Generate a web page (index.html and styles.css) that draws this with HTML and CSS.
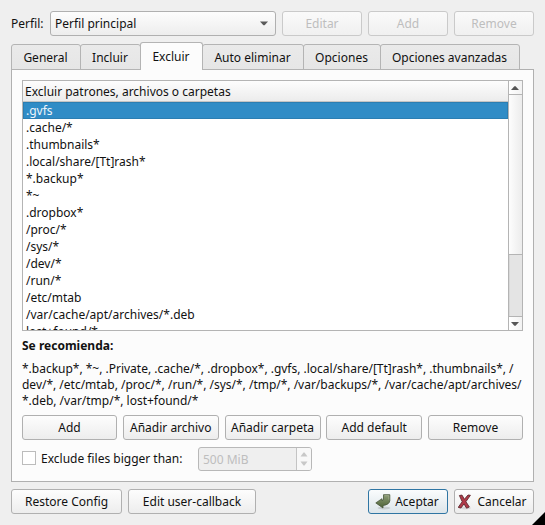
FILE: index.html
```html
<!DOCTYPE html>
<html lang="es">
<head>
<meta charset="utf-8">
<title>Perfil</title>
<link rel="stylesheet" href="styles.css">
</head>
<body>
<div class="window">
  <div class="profile">
    <span class="profile-label">Perfil:</span>
    <div class="btn combo"><span>Perfil principal</span><svg width="8" height="5" viewBox="0 0 8 5"><path d="M0 .5h8L4.6 4.2h-1.2z" fill="#5a5a5a"/></svg></div>
    <button class="btn off">Editar</button>
    <button class="btn off">Add</button>
    <button class="btn off">Remove</button>
  </div>
  <div class="tabs">
    <div class="tab t1">General</div>
    <div class="tab t2">Incluir</div>
    <div class="tab t3 active">Excluir</div>
    <div class="tab t4">Auto eliminar</div>
    <div class="tab t5">Opciones</div>
    <div class="tab t6">Opciones avanzadas</div>
  </div>
  <div class="panel">
    <div class="listbox">
      <div class="list">
        <div class="head">Excluir patrones, archivos o carpetas</div>
        <div class="row selected">.gvfs</div>
        <div class="row">.cache/*</div>
        <div class="row">.thumbnails*</div>
        <div class="row">.local/share/[Tt]rash*</div>
        <div class="row">*.backup*</div>
        <div class="row">*~</div>
        <div class="row">.dropbox*</div>
        <div class="row">/proc/*</div>
        <div class="row">/sys/*</div>
        <div class="row">/dev/*</div>
        <div class="row">/run/*</div>
        <div class="row">/etc/mtab</div>
        <div class="row">/var/cache/apt/archives/*.deb</div>
        <div class="row">lost+found/*</div>
      </div>
      <div class="scroll">
        <div class="arrow up"><svg width="8" height="4" viewBox="0 0 8 4"><path d="M0 4h8L4.6 .2H3.4z" fill="#555"/></svg></div>
        <div class="thumb"></div>
        <div class="groove"></div>
        <div class="arrow down"><svg width="8" height="4" viewBox="0 0 8 4"><path d="M0 0h8L4.6 3.8H3.4z" fill="#555"/></svg></div>
      </div>
    </div>
    <div class="title">Se recomienda:</div>
    <p class="advice">*.backup*, *~, .Private, .cache/*, .dropbox*, .gvfs, .local/share/[Tt]rash*, .thumbnails*, /<br>dev/*, /etc/mtab, /proc/*, /run/*, /sys/*, /tmp/*, /var/backups/*, /var/cache/apt/archives/<br>*.deb, /var/tmp/*, lost+found/*</p>
    <div class="actions">
      <button class="btn">Add</button>
      <button class="btn">Añadir archivo</button>
      <button class="btn">Añadir carpeta</button>
      <button class="btn">Add default</button>
      <button class="btn">Remove</button>
    </div>
    <div class="size">
      <span class="check"></span>
      <span class="size-label">Exclude files bigger than:</span>
      <div class="spin"><span class="value">500 MiB</span><span class="steps"><svg width="8" height="14" viewBox="0 0 8 14"><path d="M.5 4.5h7L4.5 .5h-1zM.5 9.5h7l-3 4h-1z" fill="#c8c8c8"/></svg></span></div>
    </div>
  </div>
  <div class="footer">
    <button class="btn restore">Restore Config</button>
    <button class="btn callback">Edit user-callback</button>
    <button class="btn accept"><svg width="16" height="16" viewBox="0 0 16 16"><defs><linearGradient id="g" x1="0" y1="0" x2="0" y2="1"><stop offset="0" stop-color="#8d9d78"/><stop offset="1" stop-color="#4d6236"/></linearGradient></defs><ellipse cx="9" cy="14" rx="6.5" ry="1.5" fill="#000" opacity=".12"/><path d="M8.500 .7h6.300v6Q14.500 10.600 8 11.500V14L.8 8.900 7 4.700V6.600Q8.500 6.300 8.500 5z" fill="url(#g)" stroke="#46553a" stroke-width=".8" stroke-linejoin="round"/><path d="M9.500 1.700h4.300v4" fill="none" stroke="#a9b599" stroke-width=".6"/></svg>Aceptar</button>
    <button class="btn cancel"><svg width="14" height="16" viewBox="1 0 14 16"><ellipse cx="8" cy="14" rx="6" ry="1.500" fill="#000" opacity=".1"/><path d="M2.400 1.500 5 1.100 7.400 5.300 11 1 13.400 1.300 8.900 7.700 12.300 13 9.600 14.200 7 9.900 3.900 14 1.200 13.400 5.200 7.700z" fill="#b13a48" stroke="#5e2930" stroke-width=".9" stroke-linejoin="round"/></svg>Cancelar</button>
  </div>
  <div class="corner"></div>
</div>
</body>
</html>
```
FILE: styles.css
```css
* { box-sizing: border-box; }
body {
  margin: 0;
  background: #efefef;
  color: #111;
  font: 12px/17px "Noto Sans", sans-serif;
}
.window {
  position: relative;
  width: 545px;
  height: 525px;
  padding: 11px 11px 0;
  overflow: hidden;
  white-space: nowrap;
}
.btn {
  display: flex;
  align-items: center;
  justify-content: center;
  height: 25px;
  padding: 0;
  border: 1px solid #b0b0b0;
  border-radius: 3px;
  background: linear-gradient(#fdfdfd, #ededed);
  color: #111;
  font: inherit;
}
.profile {
  display: grid;
  grid-template-columns: 33px 226px 80px 80px 80px;
  column-gap: 6px;
  align-items: center;
}
.profile-label { width: 33px; }
.combo { justify-content: space-between; padding: 0 7px 0 4px; }
.off { border-color: #cacaca; color: #bebebe; background: linear-gradient(#fafafa, #f0f0f0); }
.tabs {
  position: relative;
  display: flex;
  align-items: flex-end;
  height: 28px;
  margin: 6px 0 -1px;
}
.tab {
  height: 26px;
  margin-left: -1px;
  padding: 4px 1px 0 0;
  border: 1px solid #b4b4b4;
  border-radius: 3px 3px 0 0;
  background: linear-gradient(#eaeaea, #e6e6e6);
  text-align: center;
}
.t1 { width: 70px; margin-left: 0; }
.t2 { width: 61px; }
.t3 { width: 63px; }
.t4 { width: 102px; }
.t5 { width: 78px; }
.t6 { width: 140px; }
.tab.active {
  height: 28px;
  padding-top: 5px;
  border-bottom: 0;
  background: #fcfcfc;
  z-index: 1;
}
.panel {
  height: 413px;
  padding: 10px;
  border: 1px solid #b0b0b0;
  background: #fcfcfc;
}
.listbox {
  display: flex;
  height: 251px;
  border: 1px solid #b4b4b4;
  background: #fff;
}
.list { flex: 1; overflow: hidden; }
.head {
  height: 21px;
  padding: 2px 0 0 2px;
  border-bottom: 1px solid #c4c4c4;
  background: linear-gradient(#fdfdfd, #ececec);
}
.row { height: 17px; padding-left: 3px; }
.selected { background: #308cc6; box-shadow: inset 0 0 0 1px #2b7eb2; color: #eff5fa; }
.scroll {
  display: flex;
  flex-direction: column;
  width: 14px;
  border-left: 1px solid #b4b4b4;
}
.arrow {
  display: flex;
  align-items: center;
  justify-content: center;
  height: 14px;
  padding-right: 1px;
  background: linear-gradient(90deg, #fff, #f2f2f2);
}
.up { border-bottom: 1px solid #b4b4b4; }
.down { border-top: 1px solid #b4b4b4; }
.thumb {
  height: 160px;
  border-bottom: 1px solid #b4b4b4;
  background: linear-gradient(90deg, #fdfdfd, #ececec);
}
.groove { flex: 1; background: #e4e4e4; box-shadow: inset 1px 0 #d8d8d8; }
.title { margin-top: 6px; font-weight: 700; }
.advice { margin: 7px 0 6px; line-height: 16px; letter-spacing: -0.01px; }
.actions { display: grid; grid-template-columns: 95px 96px 96px 96px 95px; justify-content: space-between; }
.size { display: flex; align-items: center; margin-top: 7px; height: 24px; }
.check { width: 14px; height: 14px; margin-top: -2px; border: 1px solid #bcbcbc; background: #fff; }
.size-label { width: 157px; margin: -1px 0 0 5px; }
.spin {
  display: flex;
  width: 114px;
  height: 24px;
  border: 1px solid #b8b8b8;
  border-radius: 3px;
  background: #efefef;
  color: #bebebe;
}
.value { flex: 1; padding: 3px 0 0 4px; }
.steps {
  display: flex;
  align-items: center;
  justify-content: center;
  width: 15px;
  border-left: 1px solid #c4c4c4;
  border-radius: 0 2px 2px 0;
  background: #f8f8f8;
}
.footer { display: flex; gap: 6px; margin-top: 7px; }
.restore { width: 111px; }
.callback { width: 128px; }
.accept {
  width: 80px;
  margin-left: auto;
  padding-right: 2px;
  gap: 4px;
  border-color: #2f75a3;
  background: linear-gradient(#fafcfd, #dce5ea);
}
.cancel { width: 80px; padding-right: 3px; gap: 5px; }
.corner {
  position: absolute;
  right: 0;
  bottom: 0;
  width: 13px;
  height: 13px;
  background: #000;
  clip-path: polygon(100% 0, 100% 100%, 0 100%);
}
```
